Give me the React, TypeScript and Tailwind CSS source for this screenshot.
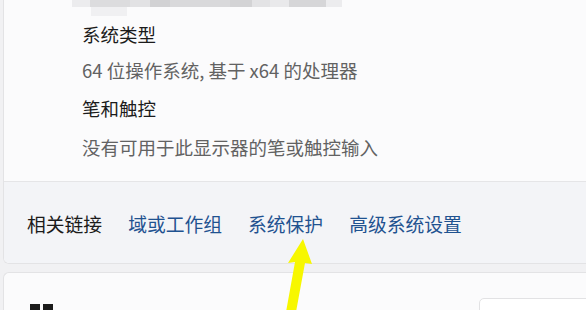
import React from 'react'

const font = {fontFamily: '"Noto Sans CJK SC", "Noto Sans", sans-serif'}

// pixelated blur strip at the top of the card
const blurBlocks = [
  {w: 18, c: 'bg-[#ececee]'},
  {w: 40, c: 'bg-[#dcdcde]'},
  {w: 20, c: 'bg-[#e2e2e4]'},
  {w: 20, c: 'bg-[#d2d2d4]'},
  {w: 60, c: 'bg-[#d9d9db]'},
  {w: 22, c: 'bg-[#d3d3d5]'},
  {w: 18, c: 'bg-[#e3e3e5]'},
  {w: 19, c: 'bg-[#e9e9eb]'},
  {w: 37, c: 'bg-[#d6d6d8]'},
  {w: 16, c: 'bg-[#ececee]'},
]

function InfoLine({text, muted, className}: {text: string; muted?: boolean; className?: string}) {
  return (
    <div
      className={
        'h-[36px] leading-[36px] text-[18.5px] whitespace-nowrap ' +
        (muted ? 'text-[#626262] ' : 'text-[#1b1b1b] ') +
        (className ?? '')
      }
    >
      {text}
    </div>
  )
}

export default function App() {
  const links = ['域或工作组', '系统保护', '高级系统设置']
  return (
    <div className="relative w-[586px] h-[310px] overflow-hidden bg-[#f1f1f3]" style={font}>
      <div className="ml-[3px] border-l border-b border-[#e3e3e5] rounded-bl-[6px] bg-[#fbfbfc] overflow-hidden">
        <div className="h-[181px] relative">
          <div className="absolute left-[68px] top-0 flex h-[7px]">
            {blurBlocks.map((b, i) => (
              <div key={i} className={b.c} style={{width: b.w}} />
            ))}
          </div>
          <div className="absolute left-[87px] top-[7px] h-[9px] w-[36px] bg-[#f0f0f2]" />
          <div className="pl-[78px] pt-[16px]">
            <InfoLine text="系统类型" />
            <InfoLine text="64 位操作系统, 基于 x64 的处理器" muted />
            <InfoLine text="笔和触控" className="mt-[2px]" />
            <InfoLine text="没有可用于此显示器的笔或触控输入" muted className="mt-[3px]" />
          </div>
        </div>
        <div className="h-[82px] border-t border-[#e5e5e7] bg-[#f3f4f7] flex items-center pl-[23px] gap-[26px] pt-[3px] text-[18.8px] whitespace-nowrap">
          <span className="text-[#1b1b1b]">相关链接</span>
          {links.map((l) => (
            <span key={l} className="text-[#1f5290]">
              {l}
            </span>
          ))}
        </div>
      </div>
      <div className="ml-[3px] mt-[8px] h-[60px] border-l border-t border-[#e3e3e5] rounded-tl-[6px] bg-[#fbfbfc] relative">
        <div className="absolute left-[26px] top-[31px] grid grid-cols-2 gap-[3px]">
          <div className="w-[10px] h-[10px] bg-[#1b1b1b]" />
          <div className="w-[10px] h-[10px] bg-[#1b1b1b]" />
        </div>
        <div className="absolute left-[475px] top-[25px] w-[120px] h-[40px] border border-[#e2e2e4] rounded-[5px] bg-white" />
      </div>
      <svg className="absolute left-0 top-0 pointer-events-none" width="586" height="310">
        <polygon
          points="303,239 288,263 295,262 286,312 296,312 305,263 312,264"
          fill="#f7f700"
        />
      </svg>
    </div>
  )
}
